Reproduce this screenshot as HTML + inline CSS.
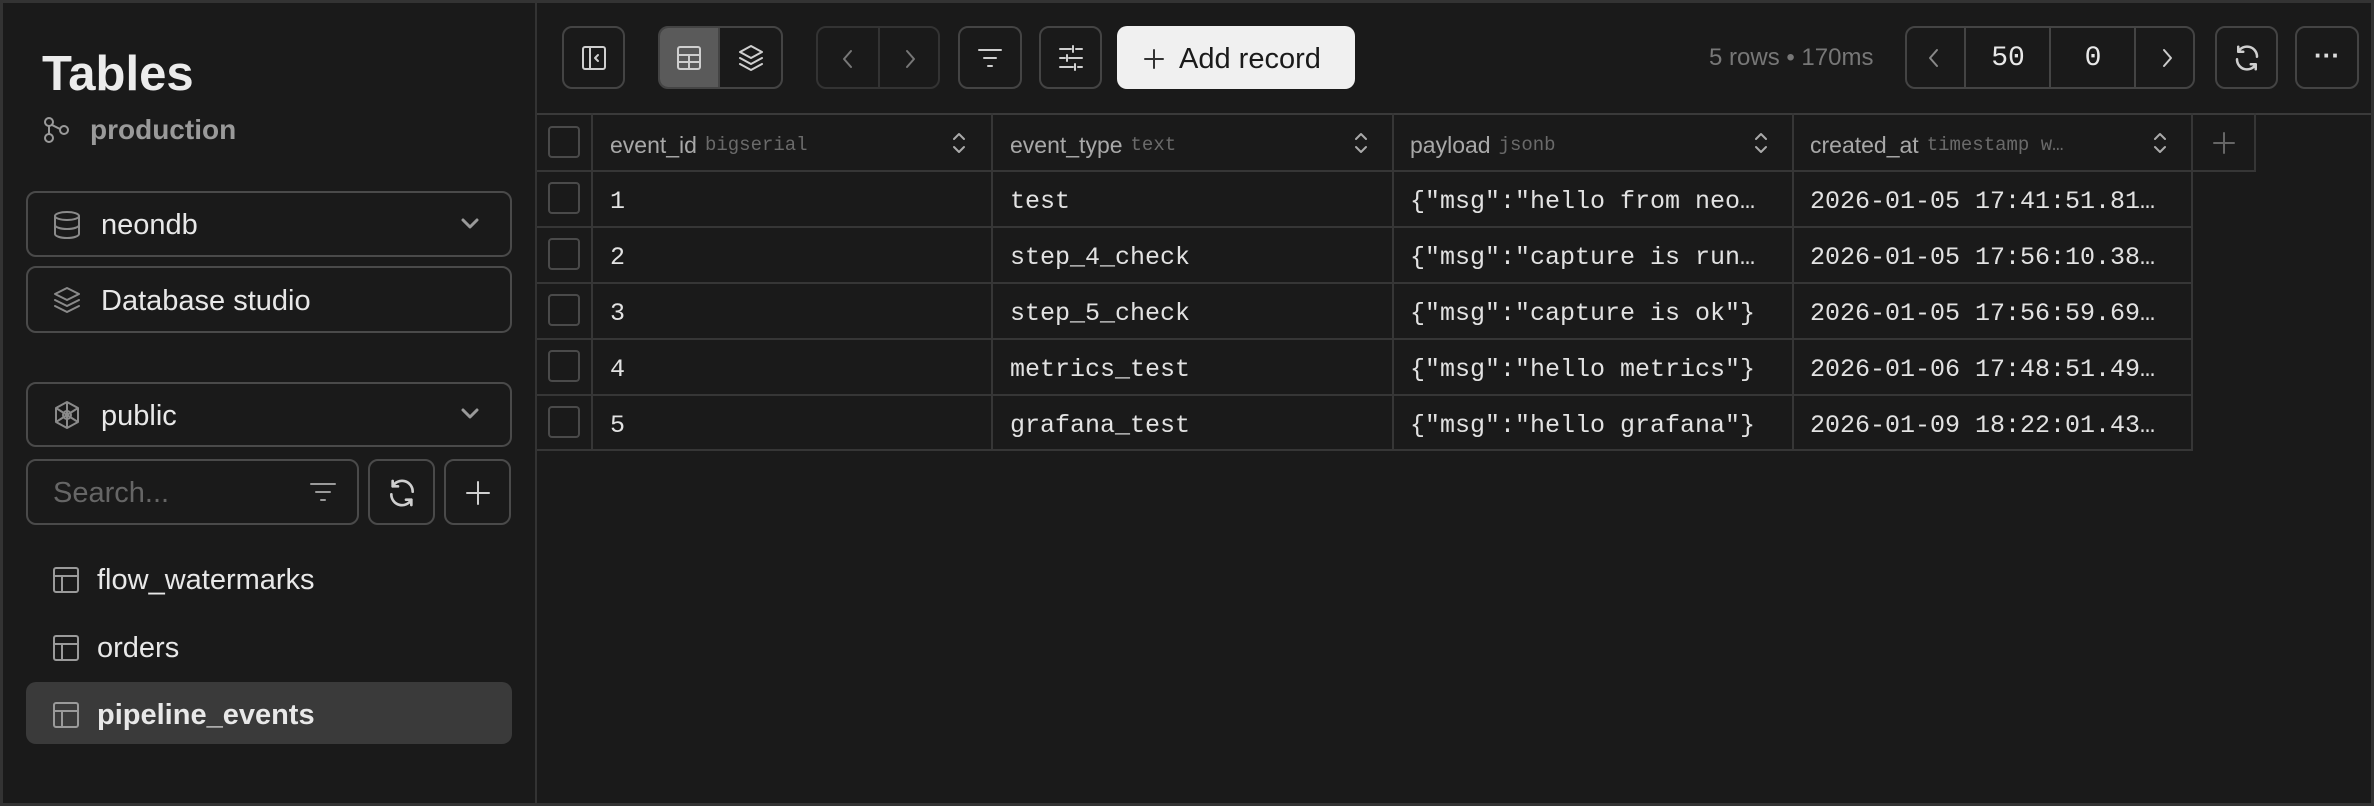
<!DOCTYPE html>
<html><head><meta charset="utf-8"><style>
*{box-sizing:border-box;margin:0;padding:0}
body{width:2374px;height:806px;background:#1a1a1a;color:#e8e8e8;font-family:"Liberation Sans",sans-serif;position:relative;overflow:hidden}
.a{position:absolute}
.frame{left:0;top:0;width:2374px;height:806px;border:3px solid #333;pointer-events:none}
.side{left:0;top:0;width:537px;height:806px;border-right:2px solid #333}
.box{border:2px solid #4a4a4a;border-radius:10px}
.sel{display:flex;align-items:center;font-size:29px;color:#e8e8e8}
.btn{border:2px solid #444;border-radius:10px;display:flex;align-items:center;justify-content:center}
svg{fill:none;stroke:#cfcfcf;stroke-width:2;stroke-linecap:round;stroke-linejoin:round}
.mono{font-family:"Liberation Mono",monospace}
.cell{position:absolute;display:flex;align-items:center;font-size:25px;color:#e2e2e2;white-space:nowrap;overflow:hidden;padding-top:4px}
.hd{font-size:23px;color:#a8a8a8}
.hd small{font-family:"Liberation Mono",monospace;font-size:19px;color:#6a6a6a;margin-left:8px}
.chk{position:absolute;width:32px;height:32px;border:2px solid #4a4a4a;border-radius:4px}
.hl{position:absolute;height:2px;background:#363636}
.vl{position:absolute;width:2px;background:#363636}
</style></head><body>
<div class="a side"></div>
<div class="a" style="left:42px;top:46px;font-size:49px;font-weight:bold;color:#ececec">Tables</div>
<svg class="a" style="left:42px;top:116px;stroke:#9a9a9a" width="30" height="28" viewBox="0 0 30 28"><circle cx="7" cy="6" r="4"/><circle cx="7" cy="22" r="4"/><circle cx="22" cy="14" r="4"/><path d="M10 9 L18 13 M7 10 V18"/></svg>
<div class="a" style="left:90px;top:114px;font-size:28px;font-weight:bold;color:#9a9a9a">production</div>

<div class="a box sel" style="left:26px;top:191px;width:486px;height:66px;padding-left:73px;padding-top:3px">neondb</div>
<svg class="a" style="left:52px;top:210px;stroke:#8a8a8a" width="30" height="30" viewBox="0 0 30 30"><ellipse cx="15" cy="6" rx="12" ry="4"/><path d="M3 6v18c0 2 5 4 12 4s12-2 12-4V6M3 15c0 2 5 4 12 4s12-2 12-4"/></svg>
<svg class="a" style="left:460px;top:214px;stroke:#9a9a9a;stroke-width:3" width="20" height="20" viewBox="0 0 20 20"><path d="M3 6l7 7 7-7"/></svg>

<div class="a box sel" style="left:26px;top:266px;width:486px;height:67px;padding-left:73px;padding-top:3px">Database studio</div>
<svg class="a" style="left:52px;top:285px;stroke:#8a8a8a" width="30" height="30" viewBox="0 0 30 30"><path d="M15 3l12 6-12 6-12-6z M3 15l12 6 12-6 M3 21l12 6 12-6"/></svg>

<div class="a box sel" style="left:26px;top:382px;width:486px;height:65px;padding-left:73px;padding-top:3px">public</div>
<svg class="a" style="left:52px;top:400px;stroke:#8a8a8a" width="30" height="30" viewBox="0 0 30 30"><circle cx="15" cy="15" r="4"/><path d="M15 2v26M4 8l22 14M26 8L4 22M15 2l11 6v14l-11 6-11-6V8z"/></svg>
<svg class="a" style="left:460px;top:404px;stroke:#9a9a9a;stroke-width:3" width="20" height="20" viewBox="0 0 20 20"><path d="M3 6l7 7 7-7"/></svg>

<div class="a box sel" style="left:26px;top:459px;width:333px;height:66px;padding-left:25px;padding-top:3px;color:#666">Search...</div>
<svg class="a" style="left:308px;top:479px;stroke:#9a9a9a" width="30" height="26" viewBox="0 0 30 26"><path d="M3 5h24M8 13h14M13 21h4"/></svg>
<div class="a box" style="left:368px;top:459px;width:67px;height:66px"></div>
<svg class="a" style="left:386px;top:477px" width="32" height="32" viewBox="0 0 24 24"><path d="M20 11A8 8 0 0 0 5 7M4 13a8 8 0 0 0 15 4M5 3v4h4M19 21v-4h-4"/></svg>
<div class="a box" style="left:444px;top:459px;width:67px;height:66px"></div>
<svg class="a" style="left:464px;top:479px" width="28" height="28" viewBox="0 0 28 28"><path d="M14 3v22M3 14h22"/></svg>

<div class="a" style="left:26px;top:682px;width:486px;height:62px;background:#3a3a3a;border-radius:10px"></div>
<svg class="a" style="left:52px;top:566px;stroke:#9a9a9a" width="28" height="28" viewBox="0 0 28 28"><rect x="2" y="2" width="24" height="24" rx="2"/><path d="M2 10h24M10 10v16"/></svg>
<svg class="a" style="left:52px;top:634px;stroke:#9a9a9a" width="28" height="28" viewBox="0 0 28 28"><rect x="2" y="2" width="24" height="24" rx="2"/><path d="M2 10h24M10 10v16"/></svg>
<svg class="a" style="left:52px;top:701px;stroke:#9a9a9a" width="28" height="28" viewBox="0 0 28 28"><rect x="2" y="2" width="24" height="24" rx="2"/><path d="M2 10h24M10 10v16"/></svg>
<div class="a" style="left:97px;top:564px;font-size:29px">flow_watermarks</div>
<div class="a" style="left:97px;top:632px;font-size:29px">orders</div>
<div class="a" style="left:97px;top:699px;font-size:29px;font-weight:bold">pipeline_events</div>

<!-- toolbar -->
<div class="a btn" style="left:562px;top:26px;width:63px;height:63px"><svg width="26" height="26" viewBox="0 0 26 26"><rect x="2" y="2" width="22" height="22" rx="2"/><path d="M9 2v22M17 10l-3 3 3 3"/></svg></div>
<div class="a btn" style="left:658px;top:26px;width:125px;height:63px;justify-content:flex-start;overflow:hidden">
<div style="width:61px;height:100%;background:#5a5a5a;display:flex;align-items:center;justify-content:center;border-right:2px solid #444"><svg width="26" height="26" viewBox="0 0 26 26"><rect x="2" y="2" width="22" height="22" rx="2"/><path d="M2 10h22M2 17h22M13 10v14"/></svg></div>
<div style="width:62px;display:flex;justify-content:center"><svg width="28" height="30" viewBox="0 0 28 30"><path d="M14 3l11 6-11 6-11-6z M3 15l11 6 11-6 M3 21l11 6 11-6"/></svg></div></div>
<div class="a btn" style="left:816px;top:26px;width:124px;height:63px;border-color:#333"><div style="position:absolute;left:60px;top:0;width:2px;height:100%;background:#333"></div>
<svg class="a" style="left:20px;top:19px;stroke:#777" width="20" height="24" viewBox="0 0 20 24"><path d="M13 4L6 12l7 8"/></svg>
<svg class="a" style="left:82px;top:19px;stroke:#777" width="20" height="24" viewBox="0 0 20 24"><path d="M7 4l7 8-7 8"/></svg></div>
<div class="a btn" style="left:958px;top:26px;width:64px;height:63px"><svg width="28" height="26" viewBox="0 0 28 26"><path d="M3 5h22M8 13h12M12 21h4"/></svg></div>
<div class="a btn" style="left:1039px;top:26px;width:63px;height:63px"><svg width="28" height="28" viewBox="0 0 28 28"><path d="M3 5h11M19 5h6M16 2v6M3 14h5M12 14h13M10 11v6M3 23h13M21 23h4M18 20v6"/></svg></div>
<div class="a" style="left:1117px;top:26px;width:238px;height:63px;background:#f0f0f0;border-radius:10px;color:#1a1a1a;font-size:29px;display:flex;align-items:center;padding-left:26px;padding-top:3px"><svg style="stroke:#333;margin-right:14px" width="22" height="22" viewBox="0 0 22 22"><path d="M11 2v18M2 11h18"/></svg>Add record</div>

<div class="a" style="left:1709px;top:44px;font-size:24px;color:#777">5 rows • 170ms</div>
<div class="a btn" style="left:1905px;top:26px;width:290px;height:63px"></div>
<div class="vl" style="left:1964px;top:28px;height:59px;background:#444"></div>
<div class="vl" style="left:2049px;top:28px;height:59px;background:#444"></div>
<div class="vl" style="left:2134px;top:28px;height:59px;background:#444"></div>
<svg class="a" style="left:1924px;top:46px;stroke:#888" width="20" height="24" viewBox="0 0 20 24"><path d="M13 4L6 12l7 8"/></svg>
<div class="a mono" style="left:1966px;top:43px;width:84px;text-align:center;font-size:28px">50</div>
<div class="a mono" style="left:2051px;top:43px;width:84px;text-align:center;font-size:28px">0</div>
<svg class="a" style="left:2157px;top:46px;stroke:#ccc" width="20" height="24" viewBox="0 0 20 24"><path d="M7 4l7 8-7 8"/></svg>
<div class="a btn" style="left:2215px;top:26px;width:63px;height:63px"><svg width="30" height="30" viewBox="0 0 24 24"><path d="M20 11A8 8 0 0 0 5 7M4 13a8 8 0 0 0 15 4M5 3v4h4M19 21v-4h-4"/></svg></div>
<div class="a btn" style="left:2295px;top:26px;width:64px;height:63px;font-size:26px;font-weight:bold;color:#ddd;padding-bottom:4px">···</div>

<!-- table grid -->
<div class="hl" style="left:537px;top:113px;width:1837px;background:#3a3a3a"></div>
<div class="hl" style="left:537px;top:170px;width:1719px"></div>
<div class="hl" style="left:537px;top:226px;width:1656px"></div>
<div class="hl" style="left:537px;top:282px;width:1656px"></div>
<div class="hl" style="left:537px;top:338px;width:1656px"></div>
<div class="hl" style="left:537px;top:394px;width:1656px"></div>
<div class="hl" style="left:537px;top:449px;width:1656px"></div>
<div class="vl" style="left:591px;top:113px;height:338px"></div>
<div class="vl" style="left:991px;top:113px;height:338px"></div>
<div class="vl" style="left:1392px;top:113px;height:338px"></div>
<div class="vl" style="left:1792px;top:113px;height:338px"></div>
<div class="vl" style="left:2191px;top:113px;height:338px"></div>
<div class="vl" style="left:2254px;top:113px;height:58px"></div>

<div class="chk" style="left:548px;top:126px"></div>
<div class="chk" style="left:548px;top:182px"></div>
<div class="chk" style="left:548px;top:238px"></div>
<div class="chk" style="left:548px;top:294px"></div>
<div class="chk" style="left:548px;top:350px"></div>
<div class="chk" style="left:548px;top:406px"></div>

<div class="cell hd" style="left:610px;top:115px;height:56px">event_id<small>bigserial</small></div>
<div class="cell hd" style="left:1010px;top:115px;height:56px">event_type<small>text</small></div>
<div class="cell hd" style="left:1410px;top:115px;height:56px">payload<small>jsonb</small></div>
<div class="cell hd" style="left:1810px;top:115px;height:56px">created_at<small>timestamp w…</small></div>
<svg class="a" style="left:950px;top:130px;stroke:#aaa" width="18" height="26" viewBox="0 0 18 26"><path d="M4 9l5-5 5 5M4 17l5 5 5-5"/></svg>
<svg class="a" style="left:1352px;top:130px;stroke:#aaa" width="18" height="26" viewBox="0 0 18 26"><path d="M4 9l5-5 5 5M4 17l5 5 5-5"/></svg>
<svg class="a" style="left:1752px;top:130px;stroke:#aaa" width="18" height="26" viewBox="0 0 18 26"><path d="M4 9l5-5 5 5M4 17l5 5 5-5"/></svg>
<svg class="a" style="left:2151px;top:130px;stroke:#aaa" width="18" height="26" viewBox="0 0 18 26"><path d="M4 9l5-5 5 5M4 17l5 5 5-5"/></svg>
<svg class="a" style="left:2212px;top:131px;stroke:#666" width="24" height="24" viewBox="0 0 24 24"><path d="M12 2v20M2 12h20"/></svg>

<div class="cell mono" style="left:610px;top:171px;height:56px">1</div>
<div class="cell mono" style="left:610px;top:227px;height:56px">2</div>
<div class="cell mono" style="left:610px;top:283px;height:56px">3</div>
<div class="cell mono" style="left:610px;top:339px;height:56px">4</div>
<div class="cell mono" style="left:610px;top:395px;height:56px">5</div>
<div class="cell mono" style="left:1010px;top:171px;height:56px">test</div>
<div class="cell mono" style="left:1010px;top:227px;height:56px">step_4_check</div>
<div class="cell mono" style="left:1010px;top:283px;height:56px">step_5_check</div>
<div class="cell mono" style="left:1010px;top:339px;height:56px">metrics_test</div>
<div class="cell mono" style="left:1010px;top:395px;height:56px">grafana_test</div>
<div class="cell mono" style="left:1410px;top:171px;height:56px">{"msg":"hello from neo…</div>
<div class="cell mono" style="left:1410px;top:227px;height:56px">{"msg":"capture is run…</div>
<div class="cell mono" style="left:1410px;top:283px;height:56px">{"msg":"capture is ok"}</div>
<div class="cell mono" style="left:1410px;top:339px;height:56px">{"msg":"hello metrics"}</div>
<div class="cell mono" style="left:1410px;top:395px;height:56px">{"msg":"hello grafana"}</div>
<div class="cell mono" style="left:1810px;top:171px;height:56px">2026-01-05 17:41:51.81…</div>
<div class="cell mono" style="left:1810px;top:227px;height:56px">2026-01-05 17:56:10.38…</div>
<div class="cell mono" style="left:1810px;top:283px;height:56px">2026-01-05 17:56:59.69…</div>
<div class="cell mono" style="left:1810px;top:339px;height:56px">2026-01-06 17:48:51.49…</div>
<div class="cell mono" style="left:1810px;top:395px;height:56px">2026-01-09 18:22:01.43…</div>
<div class="a frame"></div>
</body></html>
